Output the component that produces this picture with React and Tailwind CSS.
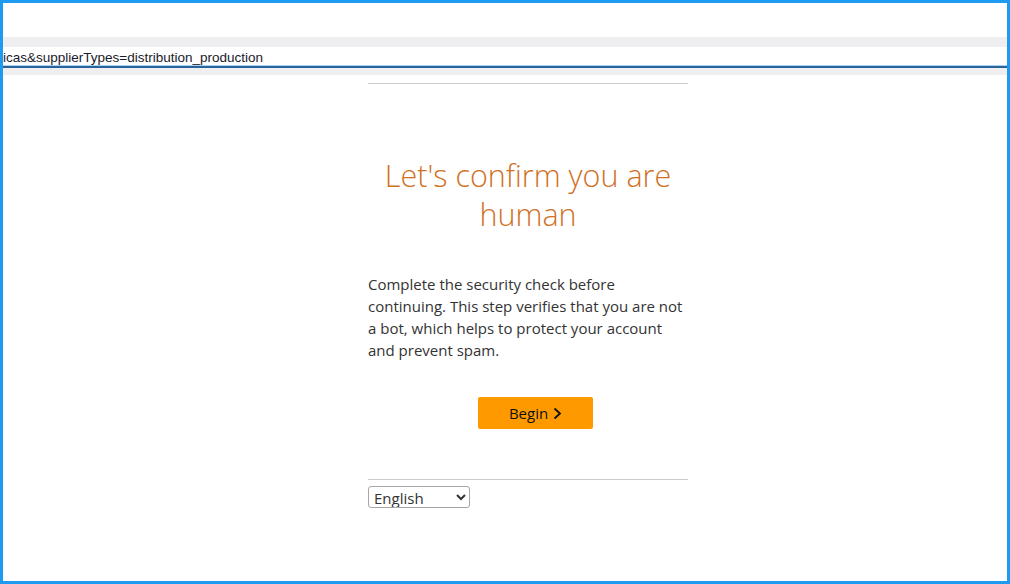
import React from 'react';

export default function App() {
  return (
    <div className="box-border flex h-[584px] w-[1010px] flex-col overflow-hidden border-[3px] border-[#1d9bf0] bg-white">
      <div className="h-[34px] shrink-0 bg-white" />
      <div className="h-[10px] shrink-0 bg-[#efeff2]" />
      <div className="flex h-[18px] shrink-0 items-end bg-white">
        <p className="whitespace-nowrap text-[13.5px] leading-[15px] text-[#1a1a2a]" style={{ fontFamily: '"Liberation Sans", Arial, sans-serif' }}>
          icas&amp;supplierTypes=distribution_production
        </p>
      </div>
      <div className="h-[1px] shrink-0 bg-[#a9d3f2]" />
      <div className="h-[2px] shrink-0 bg-[#28649a]" />
      <div className="h-[7px] shrink-0 bg-[#efeff2]" />

      <main className="ml-[365px] flex w-[320px] flex-col" style={{ fontFamily: '"Open Sans", "Noto Sans", sans-serif' }}>
        <div className="mt-[8px] h-px bg-[#cccccc]" />

        <h1 className="mt-[72px] text-center text-[30.5px] font-light leading-[39px] text-[#cf711f]">
          Let's confirm you are human
        </h1>

        <p className="mt-[39px] text-[15px] leading-[22px] text-[#333333]">
          Complete the security check before continuing. This step verifies that you are not a bot, which helps to protect your account and prevent spam.
        </p>

        <button
          type="button"
          className="ml-[110px] mt-[36px] flex h-[32px] w-[115px] items-center justify-center gap-[5px] rounded-[2px] bg-[#ff9900] text-[15px] font-medium text-[#0f1111]"
        >
          Begin
          <svg width="9" height="13" viewBox="0 0 9 13" fill="none">
            <path d="M1.5 1.5L7 6.5L1.5 11.5" stroke="#0f1111" strokeWidth="1.8" />
          </svg>
        </button>

        <div className="mt-[50px] h-px bg-[#cccccc]" />

        <select className="mt-[6px] h-[22px] w-[102px] rounded-[3px] border border-[#a6a6a6] bg-white px-[1px] text-[15px] leading-[18px] text-[#333333]">
          <option>English</option>
        </select>
      </main>
    </div>
  );
}
